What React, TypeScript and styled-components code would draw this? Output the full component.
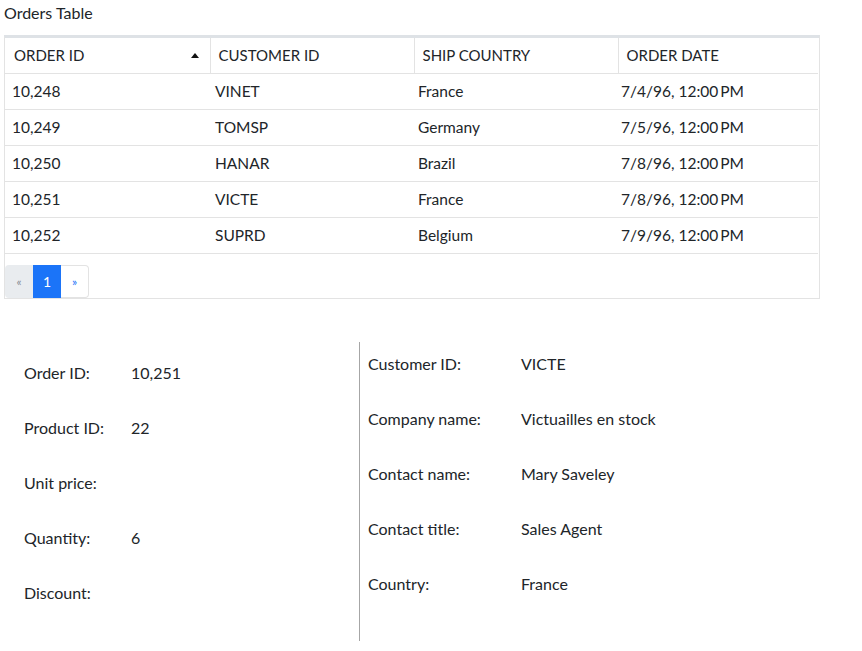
import React from 'react';
import styled, { createGlobalStyle } from 'styled-components';

const TEXT_COLOR = '#212529';
const BORDER_COLOR = '#dee2e6';
const ROW_LINE = '#e3e3e3';
const ACTIVE_BLUE = '#1b74f8';

const GlobalStyle = createGlobalStyle`
  html, body {
    margin: 0;
    padding: 0;
    background: #ffffff;
  }

  body {
    font-family: Lato, "Noto Sans", "Liberation Sans", sans-serif;
    color: ${TEXT_COLOR};
    font-size: 15px;
  }
`;

const Page = styled.div`
  padding: 4px 0 0 4px;
  width: 862px;
  box-sizing: border-box;
`;

const Title = styled.div`
  font-size: 16px;
  line-height: 18px;
  height: 31px;
`;

const Grid = styled.div`
  width: 816px;
  border: 1px solid ${ROW_LINE};
  border-top: 3px solid ${BORDER_COLOR};
  box-sizing: border-box;
`;

const Table = styled.table`
  width: 813px;
  border-collapse: collapse;
  table-layout: fixed;
`;

const HeadCell = styled.th`
  height: 35px;
  padding: 0 0 0 8px;
  text-align: left;
  font-weight: 400;
  font-size: 15px;
  border-bottom: 1px solid ${ROW_LINE};
  border-right: 1px solid ${ROW_LINE};
  position: relative;
  box-sizing: border-box;

  &:first-child {
    padding-left: 9px;
  }

  &:last-child {
    border-right: none;
  }
`;

const SortArrow = styled.span`
  position: absolute;
  right: 11px;
  top: 15px;
  width: 0;
  height: 0;
  border-left: 4px solid transparent;
  border-right: 4px solid transparent;
  border-bottom: 5px solid #111;
`;

const Row = styled.tr`
  height: 36px;
  border-bottom: 1px solid ${ROW_LINE};
`;

const Cell = styled.td<{ $inset: number }>`
  padding: 0 0 0 ${p => p.$inset}px;
  font-size: 15.5px;
  white-space: nowrap;
`;

const Pager = styled.div`
  display: flex;
  margin-top: 11px;
  height: 33px;
`;

const PageButton = styled.div<{ $variant: 'prev' | 'active' | 'next' }>`
  width: 28px;
  display: flex;
  align-items: center;
  justify-content: center;
  font-size: ${p => (p.$variant === 'active' ? '14px' : '12px')};
  box-sizing: border-box;
  background: ${p =>
    p.$variant === 'prev' ? '#e9ecef' : p.$variant === 'active' ? ACTIVE_BLUE : '#fff'};
  color: ${p => (p.$variant === 'active' ? '#fff' : p.$variant === 'prev' ? '#8a8f96' : ACTIVE_BLUE)};
  border: ${p => (p.$variant === 'next' ? `1px solid ${ROW_LINE}` : 'none')};
  border-left: none;
  border-radius: ${p =>
    p.$variant === 'prev' ? '4px 0 0 4px' : p.$variant === 'next' ? '0 4px 4px 0' : '0'};
`;

const Details = styled.div`
  display: flex;
  margin-top: 43px;
  height: 299px;
`;

const Panel = styled.div<{ $side: 'left' | 'right' }>`
  display: flex;
  flex-direction: column;
  gap: 35px;
  box-sizing: border-box;
  width: ${p => (p.$side === 'left' ? '356px' : '460px')};
  padding: ${p => (p.$side === 'left' ? '21px 0 0 20px' : '12px 0 0 8px')};
  border-right: ${p => (p.$side === 'left' ? '1px solid #a6a6a6' : 'none')};
`;

const Field = styled.div`
  display: flex;
  line-height: 20px;
  font-size: 16px;
`;

const Label = styled.span<{ $width: number }>`
  width: ${p => p.$width}px;
  flex-shrink: 0;
`;

const Value = styled.span``;

const CELL_INSETS = [7, 5, 4, 3];

const orders = [
  { id: '10,248', customer: 'VINET', country: 'France', date: '7/4/96, 12:00\u2009PM' },
  { id: '10,249', customer: 'TOMSP', country: 'Germany', date: '7/5/96, 12:00\u2009PM' },
  { id: '10,250', customer: 'HANAR', country: 'Brazil', date: '7/8/96, 12:00\u2009PM' },
  { id: '10,251', customer: 'VICTE', country: 'France', date: '7/8/96, 12:00\u2009PM' },
  { id: '10,252', customer: 'SUPRD', country: 'Belgium', date: '7/9/96, 12:00\u2009PM' },
];

const orderFields = [
  { label: 'Order ID:', value: '10,251' },
  { label: 'Product ID:', value: '22' },
  { label: 'Unit price:', value: '' },
  { label: 'Quantity:', value: '6' },
  { label: 'Discount:', value: '' },
];

const customerFields = [
  { label: 'Customer ID:', value: 'VICTE' },
  { label: 'Company name:', value: 'Victuailles en stock' },
  { label: 'Contact name:', value: 'Mary Saveley' },
  { label: 'Contact title:', value: 'Sales Agent' },
  { label: 'Country:', value: 'France' },
];

const App = () => (
  <>
    <GlobalStyle />
    <Page>
      <Title>Orders Table</Title>
      <Grid>
        <Table>
          <colgroup>
            <col style={{ width: 205 }} />
            <col style={{ width: 204 }} />
            <col style={{ width: 204 }} />
            <col />
          </colgroup>
          <thead>
            <tr>
              <HeadCell>
                ORDER ID
                <SortArrow />
              </HeadCell>
              <HeadCell>CUSTOMER ID</HeadCell>
              <HeadCell>SHIP COUNTRY</HeadCell>
              <HeadCell>ORDER DATE</HeadCell>
            </tr>
          </thead>
          <tbody>
            {orders.map(order => (
              <Row key={order.id}>
                {[order.id, order.customer, order.country, order.date].map((text, i) => (
                  <Cell key={i} $inset={CELL_INSETS[i]}>
                    {text}
                  </Cell>
                ))}
              </Row>
            ))}
          </tbody>
        </Table>
        <Pager>
          <PageButton $variant="prev">«</PageButton>
          <PageButton $variant="active">1</PageButton>
          <PageButton $variant="next">»</PageButton>
        </Pager>
      </Grid>
      <Details>
        <Panel $side="left">
          {orderFields.map(field => (
            <Field key={field.label}>
              <Label $width={107}>{field.label}</Label>
              <Value>{field.value}</Value>
            </Field>
          ))}
        </Panel>
        <Panel $side="right">
          {customerFields.map(field => (
            <Field key={field.label}>
              <Label $width={153}>{field.label}</Label>
              <Value>{field.value}</Value>
            </Field>
          ))}
        </Panel>
      </Details>
    </Page>
  </>
);

export default App;
